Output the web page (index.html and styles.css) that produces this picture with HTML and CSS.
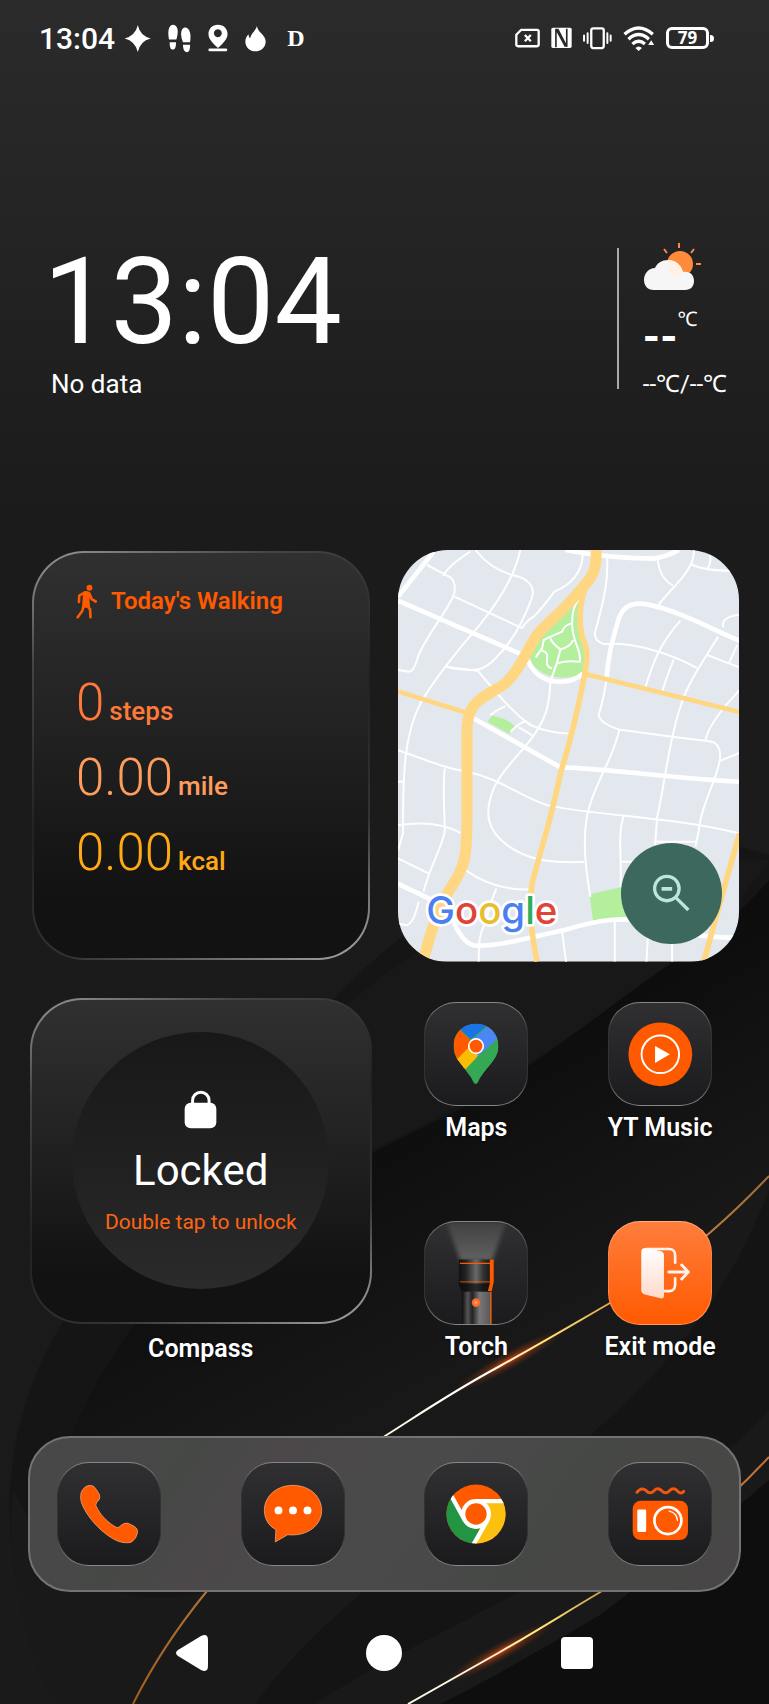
FILE: index.html
```
<!DOCTYPE html>
<html lang="en">
<head>
  <meta charset="UTF-8">
  <meta name="viewport" content="width=device-width, initial-scale=1.0">
  <title>Home screen</title>
  <link rel="stylesheet" href="styles.css">
</head>
<body>
  <!-- Wallpaper -->
  <svg class="wallpaper" viewBox="0 0 769 1704" preserveAspectRatio="none" aria-hidden="true">
    <defs>
      <linearGradient id="streak" gradientUnits="userSpaceOnUse" x1="769" y1="1176" x2="133" y2="1704">
        <stop offset="0" stop-color="#a86a38"/>
        <stop offset="0.2" stop-color="#c98a3c"/>
        <stop offset="0.33" stop-color="#ffe070"/>
        <stop offset="0.42" stop-color="#ffffff"/>
        <stop offset="0.6" stop-color="#fff6dc"/>
        <stop offset="0.75" stop-color="#b98040"/>
        <stop offset="1" stop-color="#a06018"/>
      </linearGradient>
      <linearGradient id="streak2" gradientUnits="userSpaceOnUse" x1="769" y1="1457" x2="408" y2="1704">
        <stop offset="0" stop-color="#c0703a"/>
        <stop offset="0.45" stop-color="#c08a3c"/>
        <stop offset="0.65" stop-color="#ffe878"/>
        <stop offset="0.8" stop-color="#fff0e0"/>
        <stop offset="1" stop-color="#fffbe8"/>
      </linearGradient>
      <radialGradient id="glow">
        <stop offset="0" stop-color="#ff4a10" stop-opacity="0.75"/>
        <stop offset="0.5" stop-color="#e05010" stop-opacity="0.25"/>
        <stop offset="1" stop-color="#c04000" stop-opacity="0"/>
      </radialGradient>
      <linearGradient id="band" gradientUnits="userSpaceOnUse" x1="380" y1="1120" x2="500" y2="1340">
        <stop offset="0" stop-color="#0d0d0d"/>
        <stop offset="1" stop-color="#181818"/>
      </linearGradient>
    </defs>
    <path fill="#151515" d="M769 855 C600 800 450 880 335 997 C220 1120 100 1240 62 1324 C20 1390 0 1480 14 1560 L60 1704 H769Z"/>
    <path fill="#181818" d="M769 860 C730 920 690 950 640 985 C580 1030 500 1090 372 1150 L300 1050 C420 920 580 860 769 860Z"/>
    <path fill="url(#band)" d="M769 880 C730 925 690 950 640 985 C590 1022 520 1075 455 1112 C300 1185 180 1260 135 1324 C90 1385 65 1440 50 1500 L300 1650 L769 1300Z"/>
    <path fill="#191919" d="M769 1177 C680 1275 600 1310 500 1366 C350 1452 250 1530 207 1591 C100 1620 40 1550 14 1490 C0 1560 40 1704 60 1704 H769Z"/>
    <path fill="#141414" d="M769 1190 C720 1320 640 1390 590 1436 C480 1500 330 1600 255 1704 H769Z"/>
    <path fill="#191919" d="M769 1410 C680 1500 620 1545 560 1570 C470 1620 380 1660 315 1704 H769Z"/>
    <path fill="#0e0e0e" d="M769 1480 C700 1540 640 1585 600 1615 C540 1650 480 1685 440 1704 H769Z"/>
    <ellipse cx="510" cy="1360" rx="65" ry="9" fill="url(#glow)" transform="rotate(-29 510 1360)"/>
    <ellipse cx="500" cy="1652" rx="65" ry="9" fill="url(#glow)" transform="rotate(-29 500 1652)"/>
    <path fill="none" stroke="url(#streak)" stroke-width="2" d="M769 1176 C712 1236 660 1276 610 1303 C560 1332 540 1344 500 1366 C450 1393 420 1414 385 1436 C310 1484 255 1532 207 1591 C175 1630 152 1666 133 1704"/>
    <path fill="none" stroke="url(#streak2)" stroke-width="2" d="M769 1457 C715 1515 660 1558 602 1591 C560 1616 540 1629 500 1652 L408 1704"/>
  </svg>

  <header class="status-bar">
    <div class="status-group">
      <span class="status-time">13:04</span>
      <svg class="sparkle" viewBox="374 75 80 82" width="27" height="27"><path fill="#fff" d="M415 76 Q422 108 454 116 Q422 124 415 157 Q407 124 375 116 Q407 108 415 76Z"/></svg>
      <svg viewBox="500 73 69 86" width="23" height="29"><g fill="#fff"><path d="M503 119 C499 100 500 76 515 75 C531 76 532 98 525 119Z"/><path d="M505 127 L524 127 C524 140 522 149 514 149 C507 149 505 140 505 127Z"/><path d="M545 127 C535 104 539 83 552 83 C566 84 570 106 566 127Z"/><path d="M545 135 L566 135 C567 149 563 157 557 157 C549 157 545 149 545 135Z"/></g></svg>
      <svg viewBox="624 73 60 85" width="20" height="28"><path fill="#fff" fill-rule="evenodd" d="M654 75 C636 75 625 88 625 103 C625 120 641 133 654 146 C667 133 683 120 683 103 C683 88 672 75 654 75Z M654 89 A12 12 0 1 1 653 89Z"/><rect x="625" y="147" width="57" height="9" rx="4" fill="#fff"/></svg>
      <svg viewBox="741 75 64 80" width="21" height="27"><path fill="#fff" d="M777 77 C775 91 759 99 757 114 C753 111 752 107 752 102 C746 108 742 116 742 124 C742 142 756 154 773 154 C791 154 804 141 804 124 C804 104 781 98 777 77Z"/></svg>
      <span class="status-letter">D</span>
    </div>
    <div class="status-group status-right">
      <svg viewBox="393 87 76 60" width="25" height="20"><path fill="none" stroke="#fff" stroke-width="7" stroke-linejoin="round" d="M412 92 H460 Q465 92 465 97 V137 Q465 142 460 142 H402 Q397 142 397 137 V107Z"/><path stroke="#fff" stroke-width="7" d="M423 108 L441 127 M441 108 L423 127"/></svg>
      <svg viewBox="504 85 64 65" width="21" height="22"><rect x="505" y="86" width="62" height="62" rx="5" fill="#fff"/><path fill="none" stroke="#282828" stroke-width="5" d="M519 146 V90 L548 144 M552 89 V144 L524 90"/></svg>
      <svg viewBox="604 82 88 70" width="29" height="23"><rect x="629" y="86" width="38" height="60" rx="6" fill="none" stroke="#fff" stroke-width="7"/><path stroke="#fff" stroke-width="6" stroke-linecap="round" d="M607 108 V124 M618 101 V131 M678 101 V131 M688 108 V124"/></svg>
      <svg viewBox="718 77 96 76" width="32" height="25"><g fill="none" stroke="#fff" stroke-width="10"><path d="M722 102 Q765 64 808 102"/><path d="M734 117 Q765 89 796 117"/><path d="M746 132 Q765 115 784 132"/></g><path fill="#fff" d="M755 144 Q765 134 775 144 L765 153Z M794 135 L803 120 L812 135Z"/></svg>
      <span class="battery"><span class="battery-level">79</span></span>
    </div>
  </header>

  <section class="clock-widget">
    <div>
      <div class="clock-time">13:04</div>
      <div class="clock-note">No data</div>
    </div>
    <div class="weather">
      <svg viewBox="0 0 60 50" width="60" height="50">
        <circle cx="37" cy="22" r="13" fill="#ff8a3c"/>
        <path stroke="#ff8a3c" stroke-width="2" d="M36 1 V6 M21 7 L24 11 M51 7 L48 11 M53 22 H58"/>
        <path fill="#f6f6f6" d="M11 48 C4 48 1 43 1 38 C1 31 6 26 12 26 C14 21 19 18 25 18 C33 18 38 23 40 30 C47 29 51 33 51 39 C51 44 48 48 42 48Z"/>
        <path fill="#fff1e6" d="M25 18 C33 18 38 23 40 30 C38 33 35 35 32 34 C26 33 24 27 25 18Z"/>
      </svg>
      <div class="temp"><b>--</b><span>℃</span></div>
      <div class="temp-range">--℃/--℃</div>
    </div>
  </section>

  <main class="home-grid">
    <section class="card walking">
      <h2>
        <svg viewBox="170 131 64 106" width="21" height="35"><circle cx="211" cy="142" r="9" fill="#ff5a00"/><path fill="none" stroke="#ff5a00" stroke-width="8" stroke-linecap="round" stroke-linejoin="round" d="M196 157 L180 166 L179 185 M211 160 L218 177 L230 184 M193 198 L189 213 L175 232 M203 195 L213 208 L214 232"/><path fill="#ff5a00" d="M192 154 Q207 148 214 158 L211 180 L213 202 L188 204Z"/></svg>
        Today's Walking
      </h2>
      <p class="stat steps"><b>0</b> steps</p>
      <p class="stat miles"><b>0.00</b> mile</p>
      <p class="stat kcal"><b>0.00</b> kcal</p>
    </section>

    <section class="map">
      <svg class="map-art" viewBox="23 30 1024 1234" preserveAspectRatio="xMidYMid slice" aria-label="Google map">
        <rect x="23" y="30" width="1024" height="1234" fill="#e3e7ee"/>
        <g fill="#b4ef9e">
          <path d="M588 155 C570 200 565 250 574 285 C592 330 592 380 576 402 C530 420 440 420 416 350 C440 280 510 210 588 155Z"/>
          <path d="M291 545 L305 527 C335 532 360 542 375 562 L356 581Z"/>
          <path d="M597 1062 L700 1040 L720 1132 L608 1142Z"/>
        </g>
        <g fill="none" stroke="#fff" stroke-width="6">
          <path d="M110 75 L180 112 Q197 125 192 160 C170 220 95 300 80 360 Q70 395 55 395 L23 390"/>
          <path d="M240 35 C200 60 170 85 158 108"/>
          <path d="M255 30 C290 75 330 95 365 105 C420 115 435 145 424 175 C400 240 370 300 320 350 C280 395 250 392 220 388 Q180 388 168 378"/>
          <path d="M390 30 C375 100 330 180 262 262 C210 320 130 420 90 490 C40 590 38 700 38 880 L23 930"/>
          <path d="M192 170 L395 264 Q410 240 430 230 C460 200 480 170 492 155 C550 130 575 90 577 45"/>
          <path d="M650 50 C655 130 635 200 613 280 Q613 305 640 312 C730 305 840 340 920 384"/>
          <path d="M802 60 Q808 115 847 136 M910 30 C915 90 840 145 803 196 M900 72 Q945 95 1047 92 M950 90 Q965 60 958 45"/>
          <path d="M870 242 C810 310 790 360 765 440 M850 358 Q825 420 815 455"/>
          <path d="M1047 225 Q990 230 998 262 M983 290 C940 360 890 430 870 500 C835 600 820 750 800 830 L794 915"/>
          <path d="M950 345 L1047 382 M1015 370 L1040 315"/>
          <path d="M647 425 C640 480 630 500 625 525 Q630 550 685 568 L845 590 L950 603 Q995 605 988 660 C975 730 930 800 925 870 L915 920"/>
          <path d="M1047 450 C1000 500 950 560 945 603 M990 662 L1047 638"/>
          <path d="M687 568 C670 650 620 720 600 790 C575 860 580 960 600 1070"/>
          <path d="M700 828 C680 880 695 960 690 1040 M693 965 H740"/>
          <path d="M23 630 C120 665 170 685 230 695 C330 715 390 770 470 795 C600 825 850 830 1047 880"/>
          <path d="M480 420 C478 500 465 540 420 600 C370 660 330 700 310 745 C280 820 290 870 350 915 C410 960 480 970 582 965"/>
          <path d="M165 380 L262 392 C320 460 370 520 420 555 Q480 580 535 580 M300 525 Q320 508 345 498 M360 575 Q385 550 405 543 L430 560 M385 562 L425 585"/>
          <path d="M163 685 C155 760 165 830 163 875 C155 920 110 1000 100 1055 M23 855 C90 845 160 850 210 878 M23 955 L115 1000"/>
          <path d="M225 990 Q310 1050 415 1048 M318 1045 Q295 1100 290 1140 C265 1180 265 1210 265 1264 M85 1085 Q70 1150 50 1155 L23 1150"/>
          <path d="M515 1175 L527 1264 M673 1145 V1264 M772 1190 L768 1264 M845 1210 V1264 M23 725 H38 M790 905 H920"/>
          <path d="M565 180 Q545 200 545 250 C545 310 575 330 568 365 Q520 360 498 372 L480 425 M545 250 Q520 255 515 275 Q480 290 460 300 L455 325 L436 352 M480 295 Q485 310 510 328 L498 375 M510 328 Q540 320 548 300 M455 332 C490 340 450 375 485 385"/>
        </g>
        <g fill="none" stroke="#fff" stroke-width="14">
          <path d="M23 170 L130 35"/>
          <path d="M23 182 L410 350"/>
          <path d="M412 360 Q440 425 510 425 Q550 425 578 400"/>
          <path d="M525 30 C600 45 700 55 790 56 Q830 50 865 30"/>
          <path d="M648 415 C655 330 670 290 685 235 Q705 180 770 193 C860 210 960 265 1047 302"/>
          <path d="M250 535 L510 682 C650 685 850 715 1047 725"/>
          <path d="M23 1030 C80 1060 130 1075 180 1120 Q210 1205 250 1216 C330 1220 420 1190 520 1170 C620 1140 700 1125 790 1150 Q900 1195 1047 1192"/>
        </g>
        <g fill="none" stroke="#ffd782">
          <path stroke-width="14" d="M23 454 L235 520 M585 402 L1047 516"/>
          <path stroke-width="17" d="M595 120 C560 190 568 260 575 290 C600 340 585 370 583 405 C560 520 535 620 510 700 C480 850 450 930 425 1030 C415 1100 420 1170 440 1264 M1047 880 C1010 1010 985 1100 940 1264"/>
          <path stroke-width="33" d="M617 30 C620 100 600 115 570 150 C500 235 450 260 430 300 C395 360 385 390 345 430 C290 470 235 475 230 560 V820 C230 950 225 980 180 1045 C140 1110 120 1180 98 1264"/>
        </g>
        <g class="map-logo">
          <text x="108" y="1150"><tspan fill="#4c7ff0">G</tspan><tspan fill="#e04437">o</tspan><tspan fill="#e8bd2e">o</tspan><tspan fill="#4c7ff0">g</tspan><tspan fill="#2fae5a">l</tspan><tspan fill="#e04437">e</tspan></text>
        </g>
      </svg>
      <button class="map-zoom" type="button" aria-label="Zoom out">
        <svg viewBox="780 1002 118 118" width="39" height="39"><g fill="none" stroke="#b9e8da" stroke-width="10"><circle cx="825" cy="1046" r="37"/><path d="M853 1074 L890 1111"/><path d="M809 1047 H841" stroke-width="12"/></g></svg>
      </button>
    </section>

    <section class="compass">
      <div class="card lock-card">
        <div class="lock-dial">
          <svg viewBox="490 314 100 117" width="33" height="39"><rect x="492" y="352" width="96" height="77" rx="18" fill="#fff"/><path fill="none" stroke="#fff" stroke-width="9" d="M516 356 V345 A25 25 0 0 1 566 345 V356"/></svg>
          <div class="lock-title">Locked</div>
          <div class="lock-hint">Double tap to unlock</div>
        </div>
      </div>
      <div class="label">Compass</div>
    </section>

    <nav class="apps">
      <a class="app" href="#maps">
        <span class="tile">
          <svg viewBox="74 66 310 310">
            <defs><clipPath id="pin"><path d="M229 129 C190 129 161 158 161 196 C161 215 168 232 179 245 C200 272 215 290 221 307 Q228 317 235 307 C243 285 262 265 278 245 C290 230 297 215 297 196 C297 158 268 129 229 129Z"/></clipPath></defs>
            <g clip-path="url(#pin)">
              <path fill="#34a853" d="M150 120 H310 V320 H150Z"/>
              <path fill="#fbbc04" d="M150 245 L229 170 L262 199 L190 275Z"/>
              <path fill="#ff5a00" d="M150 110 L182 149 L229 196 L150 262Z"/>
              <path fill="#1a73e8" d="M170 110 H290 L214 176 L182 147Z"/>
              <path fill="#4a87f5" d="M266 136 L320 150 L300 170 L229 233 L212 182Z"/>
              <path fill="#34a853" d="M300 172 L182 285 L300 300Z"/>
              <path fill="#fbbc04" d="M172 236 L215 193 L235 226 L196 263 L165 265Z"/>
            </g>
            <circle cx="229" cy="197" r="22" fill="#ff5a00" stroke="#fff" stroke-width="5"/>
          </svg>
        </span>
        <span class="label">Maps</span>
      </a>
      <a class="app" href="#music">
        <span class="tile">
          <svg viewBox="624 66 310 310"><circle cx="780" cy="222" r="97" fill="#ff5a00"/><circle cx="780" cy="222" r="57" fill="none" stroke="#fff" stroke-width="6"/><path fill="#fff" d="M764 197 L809 222 L764 248Z"/></svg>
        </span>
        <span class="label">YT Music</span>
      </a>
      <a class="app" href="#torch">
        <span class="tile">
          <svg viewBox="74 93 310 310">
            <defs>
              <linearGradient id="beam" x1="0" y1="0" x2="0" y2="1"><stop offset="0" stop-color="#888" stop-opacity="0.2"/><stop offset="1" stop-color="#888" stop-opacity="0.6"/></linearGradient>
              <filter id="soft" x="-20%" y="-20%" width="140%" height="140%"><feGaussianBlur stdDeviation="6"/></filter>
              <linearGradient id="metal"><stop offset="0" stop-color="#111"/><stop offset="0.2" stop-color="#222"/><stop offset="0.5" stop-color="#6a6a6a"/><stop offset="0.7" stop-color="#333"/><stop offset="1" stop-color="#0c0c0c"/></linearGradient>
              <linearGradient id="body"><stop offset="0" stop-color="#0c0c0c"/><stop offset="0.2" stop-color="#555"/><stop offset="0.35" stop-color="#222"/><stop offset="0.6" stop-color="#777"/><stop offset="1" stop-color="#555"/></linearGradient>
            </defs>
            <path fill="url(#beam)" filter="url(#soft)" d="M138 93 H320 L278 212 H182Z"/>
            <path fill="url(#metal)" d="M177 207 H282 V285 L274 306 H186 L177 285Z"/>
            <path fill="#0d0d0d" opacity="0.7" d="M178 280 H270 V305 H186Z"/>
            <rect x="186" y="305" width="90" height="98" fill="url(#body)"/>
            <path fill="#ff5a00" d="M271 207 H283 V275 L277 303 H265 L271 280Z M180 217 H280 V221 H180Z M180 274 H272 V276 H180Z M272 305 H276 V403 H272Z"/>
            <circle cx="229" cy="338" r="13" fill="#ff6a2a"/><circle cx="229" cy="338" r="6" fill="#ff9a60"/>
          </svg>
        </span>
        <span class="label">Torch</span>
      </a>
      <a class="app" href="#exit">
        <span class="tile tile-orange">
          <svg viewBox="624 93 310 310">
            <defs><linearGradient id="door" x1="0" y1="0" x2="0" y2="1"><stop offset="0" stop-color="#fff"/><stop offset="1" stop-color="#ffd9cc"/></linearGradient></defs>
            <path fill="none" stroke="#fff2ea" stroke-width="8" stroke-linecap="round" d="M738 175 H806 Q825 175 825 194 V217 M825 264 V283 Q825 303 806 303 H792"/>
            <path fill="url(#door)" d="M734 172 L780 181 Q791 183 791 194 V317 Q791 327 781 325 L733 313 Q722 310 722 300 V184 Q722 172 734 172Z"/>
            <path fill="none" stroke="#fff2ea" stroke-width="9" stroke-linecap="round" stroke-linejoin="round" d="M806 245 H864 M845 224 L865 245 L845 266"/>
          </svg>
        </span>
        <span class="label">Exit mode</span>
      </a>
    </nav>
  </main>

  <nav class="dock">
    <a class="tile" href="#phone" aria-label="Phone">
      <svg viewBox="172 246 310 310"><path fill="#ff5a00" stroke="#ffb48a" stroke-width="2" d="M246 328 Q256 313 271 314 Q282 315 286 323 L298 342 Q301 352 296 359 Q286 366 287 375 C300 405 325 428 350 442 Q358 443 364 435 Q373 427 385 429 L405 439 Q415 446 414 457 Q411 475 396 486 Q380 492 355 484 C310 466 258 410 243 366 Q237 343 246 328Z"/></svg>
    </a>
    <a class="tile" href="#messages" aria-label="Messages">
      <svg viewBox="723 246 310 310"><path fill="#ff5a00" stroke="#ffb48a" stroke-width="2" d="M824 486 L826 449 C802 436 791 413 791 390 C791 347 828 314 878 314 C928 314 965 347 965 390 C965 437 920 470 862 464Z"/><g fill="#fff"><circle cx="834" cy="390" r="12"/><circle cx="878" cy="390" r="12"/><circle cx="922" cy="390" r="12"/></g></svg>
    </a>
    <a class="tile" href="#chrome" aria-label="Chrome">
      <svg viewBox="119 246 310 310">
        <defs><clipPath id="disc"><circle cx="274" cy="401" r="90"/></clipPath></defs>
        <g clip-path="url(#disc)">
          <rect x="180" y="305" width="190" height="190" fill="#ff5a00"/>
          <path fill="#229442" d="M180 310 L236 406 L274 444 L290 430 L264 500 H170Z"/>
          <path fill="#fcc010" d="M274 362 H375 V500 H268 L314 420Z"/>
          <path fill="none" stroke="#fff" stroke-width="13" d="M274 362 H375 M196 340 L239 418 M308 421 L265 496"/>
        </g>
        <circle cx="274" cy="401" r="39" fill="#ff5a00" stroke="#fff" stroke-width="13"/>
      </svg>
    </a>
    <a class="tile" href="#camera" aria-label="Camera">
      <svg viewBox="669 246 310 310"><path fill="none" stroke="#f2570c" stroke-width="9" stroke-linecap="round" d="M754 335 Q768 318 782 330 Q794 343 806 330 Q817 318 829 330 Q841 343 853 330 Q865 318 876 330 Q888 343 896 332"/><rect x="741" y="361" width="168" height="119" rx="24" fill="#ff5a00"/><rect x="755" y="387" width="27" height="69" rx="4" fill="#fff"/><circle cx="848" cy="421" r="41" fill="none" stroke="#fff" stroke-width="8"/><path fill="none" stroke="#fff" stroke-width="4" stroke-linecap="round" d="M852 392 Q874 396 877 420"/></svg>
    </a>
  </nav>

  <footer class="system-nav">
    <button type="button" aria-label="Back"><svg viewBox="0 0 34 38" width="34" height="38"><path fill="#fff" d="M3 16 L26 2 Q33 -1 33 6 V32 Q33 39 26 36 L3 22 Q-1 19 3 16Z"/></svg></button>
    <button type="button" aria-label="Home"><svg viewBox="0 0 36 36" width="36" height="36"><circle cx="18" cy="18" r="18" fill="#fff"/></svg></button>
    <button type="button" aria-label="Recent apps"><svg viewBox="0 0 34 34" width="34" height="34"><rect x="1" y="1" width="32" height="32" rx="4" fill="#fff"/></svg></button>
  </footer>
</body>
</html>
```
FILE: styles.css
```
* {
  box-sizing: border-box;
}

body {
  font-family: Roboto, "Noto Sans", sans-serif;
  margin: 0;
  min-height: 100vh;
  position: relative;
  display: flex;
  flex-direction: column;
  background: linear-gradient(#2b2b2b, #1b1b1b 30%, #1a1a1a);
  color: #fff;
}

a {
  color: inherit;
  text-decoration: none;
}

button {
  padding: 0;
  border: none;
  background: none;
  cursor: pointer;
}

svg {
  display: block;
}

.wallpaper {
  position: absolute;
  top: 0;
  left: 0;
  width: 100%;
  height: 100%;
  z-index: -1;
}

/* Status bar */
.status-bar {
  display: flex;
  justify-content: space-between;
  align-items: center;
  padding: 20px 56px 20px 39px;
}

.status-group {
  display: flex;
  align-items: center;
  gap: 17px;
  height: 36px;
}

.status-time {
  font-size: 30px;
  font-weight: 500;
}

.sparkle {
  margin-left: -8px;
}

.status-letter {
  font-family: "Liberation Serif", serif;
  font-size: 24px;
  font-weight: bold;
  margin-left: 4px;
}

.status-right {
  gap: 11px;
}

.battery {
  position: relative;
  width: 43px;
  height: 22px;
  border: 3px solid #fff;
  border-radius: 6px;
  display: flex;
  align-items: center;
  justify-content: center;
  margin-right: 4px;
}

.battery::after {
  content: "";
  position: absolute;
  left: 41px;
  top: 5px;
  width: 4px;
  height: 7px;
  background: #fff;
  border-radius: 0 4px 4px 0;
}

.battery-level {
  font-family: "Open Sans", sans-serif;
  font-size: 17px;
  line-height: 16px;
  font-weight: bold;
}

/* Clock and weather */
.clock-widget {
  display: flex;
  justify-content: space-between;
  margin-top: 166px;
  padding: 0 42px 0 43px;
}

.clock-time {
  font-size: 120px;
  line-height: 120px;
}

.clock-note {
  margin: 7px 0 0 8px;
  font-size: 26px;
  line-height: 30px;
}

.weather {
  position: relative;
  padding-left: 26px;
}

.weather::before {
  content: "";
  position: absolute;
  left: 0;
  top: 6px;
  bottom: 10px;
  width: 2px;
  background: #aaa;
}

.temp {
  display: flex;
  height: 60px;
  margin-top: 17px;
}

.temp b {
  font-size: 44px;
  line-height: 56px;
}

.temp span {
  font-size: 20px;
  line-height: 20px;
}

.temp-range {
  font-size: 24px;
  line-height: 30px;
}

/* Widgets and apps */
.home-grid {
  display: grid;
  grid-template-columns: 1fr 1fr;
  row-gap: 36px;
  margin-top: 151px;
  padding: 0 17px;
}

.card {
  border: 2px solid transparent;
  border-radius: 52px;
  background:
    linear-gradient(#303030, #232323 40%, #121212 85%) padding-box,
    linear-gradient(155deg, #999, #444 20%, #222 50%, #333 75%, #aaa) border-box;
}

.walking {
  margin: 1px 15px 2px;
  padding: 29px 42px;
}

.walking h2 {
  display: flex;
  align-items: center;
  gap: 14px;
  margin: 0 0 45px;
  font-size: 24px;
  line-height: 38px;
  font-weight: 600;
  color: #ff5a00;
}

.stat {
  display: flex;
  align-items: baseline;
  gap: 5px;
  margin: 0;
  font-size: 26px;
  line-height: 30px;
  font-weight: 500;
}

.stat b {
  font-size: 51px;
  line-height: 75px;
  font-weight: 350;
}

.steps {
  color: #ff7a38;
}

.miles {
  color: #ff9c5c;
}

.kcal {
  color: #ffa914;
}

.map {
  position: relative;
  margin: 0 13px;
  border-radius: 50px;
  overflow: hidden;
}

.map-art {
  width: 100%;
  height: 100%;
}

.map-logo {
  font-family: Inter, sans-serif;
  font-size: 115px;
  font-weight: 500;
  stroke: #fff;
  stroke-width: 16px;
  stroke-linejoin: round;
  paint-order: stroke;
}

.map-zoom {
  position: absolute;
  right: 17px;
  bottom: 18px;
  width: 101px;
  height: 101px;
  border-radius: 50%;
  background: #3c685d;
  display: flex;
  align-items: center;
  justify-content: center;
}

.compass {
  text-align: center;
}

.lock-card {
  display: flex;
  align-items: center;
  justify-content: center;
  height: 326px;
  margin: 0 13px 10px;
}

.lock-dial {
  display: flex;
  flex-direction: column;
  align-items: center;
  width: 257px;
  height: 257px;
  padding-top: 58px;
  border-radius: 50%;
  background: linear-gradient(#181818, #222 60%, #2b2b2b);
}

.lock-title {
  margin-top: 16px;
  font-size: 42px;
  line-height: 52px;
}

.lock-hint {
  margin-top: 11px;
  font-size: 21px;
  line-height: 28px;
  color: #ff6414;
  white-space: nowrap;
}

.label {
  font-size: 25px;
  line-height: 30px;
  font-weight: 600;
  text-shadow: 0 1px 3px rgba(0, 0, 0, 0.6);
}

.apps {
  display: grid;
  grid-template-columns: 1fr 1fr;
  align-content: start;
  row-gap: 78px;
  padding-top: 4px;
}

.app {
  display: flex;
  flex-direction: column;
  align-items: center;
  gap: 7px;
}

.tile {
  display: block;
  width: 104px;
  height: 104px;
  border: 1px solid transparent;
  border-radius: 32px;
  overflow: hidden;
  background:
    linear-gradient(#303032, #1b1b1d) padding-box,
    linear-gradient(#888, #333 30%, #333 70%, #888) border-box;
}

.tile svg {
  width: 100%;
  height: 100%;
}

.tile-orange {
  background:
    linear-gradient(#ff7d3c, #ff5a00) padding-box,
    linear-gradient(#ffb088, #ff7a38 40%, #ff9a60) border-box;
}

/* Dock and system navigation */
.dock {
  display: flex;
  justify-content: space-between;
  margin: 72px 28px 0;
  padding: 24px 27px;
  border: 2px solid #747474;
  border-radius: 42px;
  background: linear-gradient(125deg, #484848, #464846 22%, #4c484a 32%, #4a4a4a 50%, #464846 70%, #484646);
}

.system-nav {
  display: grid;
  grid-template-columns: 1fr 1fr 1fr;
  align-items: center;
  justify-items: center;
  padding: 42px 96px 32px;
}
```
